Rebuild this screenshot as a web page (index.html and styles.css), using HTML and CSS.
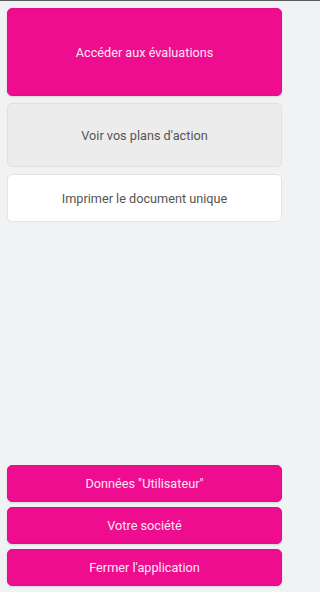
FILE: index.html
```html
<!DOCTYPE html>
<html lang="fr">
<head>
<meta charset="utf-8">
<meta name="viewport" content="width=device-width, initial-scale=1">
<title>Menu</title>
<link rel="stylesheet" href="styles.css">
</head>
<body>
<div class="app">
  <div class="top">
    <button class="btn btn-primary btn-large">Accéder aux évaluations</button>
    <button class="btn btn-gray">Voir vos plans d'action</button>
    <button class="btn btn-white">Imprimer le document unique</button>
  </div>
  <div class="bottom">
    <button class="btn btn-primary btn-small">Données "Utilisateur"</button>
    <button class="btn btn-primary btn-small">Votre société</button>
    <button class="btn btn-primary btn-small">Fermer l'application</button>
  </div>
</div>
</body>
</html>
```

FILE: styles.css
```css
html, body {
  margin: 0;
  padding: 0;
  height: 100%;
}
body {
  background: #f1f2f4;
  font-family: Roboto, "Liberation Sans", sans-serif;
  border-top: 1px solid #5a5a5a;
  box-sizing: border-box;
}
.app {
  width: 289px;
  height: 100%;
  box-sizing: border-box;
  padding: 7px 7px 6px 7px;
  display: flex;
  flex-direction: column;
  justify-content: space-between;
}
.top, .bottom {
  display: flex;
  flex-direction: column;
}
.top { gap: 7px; }
.bottom { gap: 5px; }
.btn {
  font-family: inherit;
  font-size: 12.7px;
  border-radius: 5px;
  border: 1px solid transparent;
  width: 100%;
  cursor: pointer;
  margin: 0;
  padding: 0;
}
.btn-primary {
  background: #ee0d8f;
  color: #fde6f3;
  border-color: #e80a8a;
  box-shadow: 0 1px 2px rgba(0,0,0,0.12);
}
.btn-large { height: 88px; }
.btn-gray {
  height: 64px;
  background: #ececec;
  color: #555;
  border-color: #e0e0e2;
}
.btn-white {
  height: 48px;
  background: #ffffff;
  color: #555;
  border-color: #e2e3e5;
}
.btn-small {
  height: 37px;
}
```
